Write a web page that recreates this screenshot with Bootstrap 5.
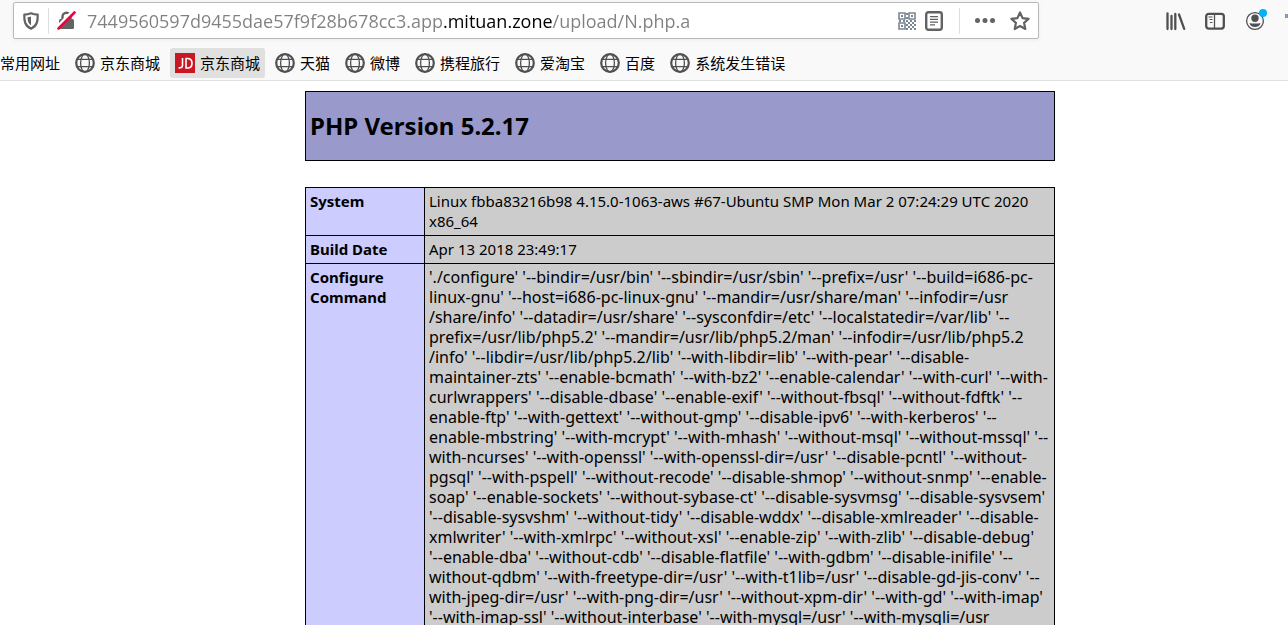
<!DOCTYPE html>
<html lang="zh-CN">
<head>
<meta charset="utf-8">
<meta name="viewport" content="width=device-width, initial-scale=1">
<title>phpinfo()</title>
<link href="https://cdn.jsdelivr.net/npm/bootstrap@5.3.0/dist/css/bootstrap.min.css" rel="stylesheet">
<script src="https://cdn.jsdelivr.net/npm/bootstrap@5.3.0/dist/js/bootstrap.bundle.min.js"></script>
<style>
  body { font-family: "Noto Sans", "Noto Sans CJK SC", sans-serif; color: #000; background: #fff; }
  .chrome { background: #f9f9fa; border-bottom: 1px solid #e0e0e1; height: 81px; }
  .nav-row { height: 43px; padding: 2px 0 4px 13px; }
  .urlbar { background: #fff; border: 1px solid #b9b9bb; border-radius: 2px; box-shadow: 0 1px 4px rgba(0,0,0,.06); padding: 0 8px; margin-right: 127px; color: #5a5a5c; }
  .urlbar .rule { width: 1px; height: 26px; background: #dedee0; }
  .address { font-family: "Open Sans", sans-serif; font-size: 18px; height: 30px; outline: 0; color: transparent; caret-color: #000; margin-left: 11px;
    background: linear-gradient(90deg, #808082 0 356px, #000 356px 466px, #808082 466px);
    -webkit-background-clip: text; background-clip: text; }
  .tool { background: none; border: 0; padding: 0; line-height: 0; color: #505052; }
  .urlbar .tool { color: #636365; }
  .page-tools { gap: 15px; }
  .tool svg, .bookmark svg { display: block; }
  .tools { gap: 19px; }
  .edge { width: 3px; height: 4px; background: #8d97a8; margin-bottom: 10px; }
  .notice { width: 8px; height: 8px; border-radius: 50%; background: #00b3f4; top: -2px; right: -1px; }
  .bookmarks { gap: 5px; height: 37px; padding-top: 5px; }
  .bookmark { height: 30px; padding: 0 5px; gap: 5px; font: 15px/30px "Noto Sans CJK SC", sans-serif; color: #000; text-decoration: none; border-radius: 3px; white-space: nowrap; }
  .bookmark.plain { padding-left: 0; }
  .bookmark.hovered { background: #e0e0e1; }
  .page { padding: 10px 0 0 72px; }
  .info { width: 750px; }
  .banner { background: #9999cc; border: 1px solid #000; height: 70px; padding: 0 4px; margin-bottom: 26px; }
  .banner h1 { font-size: 24px; line-height: 32px; font-weight: 700; }
  .facts { border-collapse: collapse; width: 100%; font-size: 15px; line-height: 20px; }
  .facts th, .facts td { border: 1px solid #000; padding: 3px 4px 4px; vertical-align: top; white-space: nowrap; }
  .facts th { background: #ccccff; width: 119px; }
  .facts td { background: #ccc; }
  .facts .command { font-size: 16px; }
</style>
</head>
<body class="vh-100 overflow-hidden d-flex flex-column">
<svg width="0" height="0" class="position-absolute" aria-hidden="true">
  <symbol id="globe" viewBox="0 0 20 20"><g fill="none" stroke="#505052"><circle cx="10" cy="10" r="8.8" stroke-width="2.2"/><ellipse cx="10" cy="10" rx="4.4" ry="8.8" stroke-width="1.3"/><path d="M2.200 6.300h15.600M2.200 13.700h15.600" stroke-width="1.300"/></g></symbol>
</svg>
<header class="chrome flex-shrink-0">
  <div class="nav-row d-flex align-items-center">
    <div class="urlbar d-flex align-items-center flex-grow-1 h-100">
      <button class="tool" type="button" aria-label="Protection"><svg width="18" height="18" viewBox="0 0 18 18"><path d="M9 1.300c2.400.9 4.500 1.300 6.700 1.400.2 6.300-.6 11.200-6.700 14C2.900 13.900 2.100 9 2.300 2.700 4.500 2.600 6.600 2.200 9 1.300z" fill="none" stroke="currentColor" stroke-width="2.200" stroke-linejoin="round"/><path d="M9 4.500c-1.200.4-2.300.6-3.500.7.1 3.500.7 6.300 3.500 8.200z" fill="currentColor"/></svg></button>
      <span class="rule ms-2"></span>
      <button class="tool ms-2" type="button" aria-label="Connection"><svg width="19" height="19" viewBox="0 0 19 19"><path d="M5.500 9V5.700a4 4 0 0 1 8 0V9" fill="none" stroke="currentColor" stroke-width="2.400"/><rect x="2" y="8" width="15" height="10" rx="1.500" fill="currentColor"/><path d="M0 16 16 0" stroke="#fff" stroke-width="3"/><path d="M1.500 17.500 17.500 1.500" stroke="#f5003d" stroke-width="2.600" stroke-linecap="round"/></svg></button>
      <input class="address flex-grow-1 border-0 p-0" type="text" aria-label="Address" spellcheck="false" value="7449560597d9455dae57f9f28b678cc3.app.mituan.zone/upload/N.php.a">
      <div class="page-tools d-flex align-items-center">
        <div class="d-flex align-items-center gap-2">
          <button class="tool" type="button" aria-label="QR code"><svg width="18" height="18" viewBox="0 0 18 18"><g fill="none" stroke="#7c8594" stroke-width="1.600"><path d="M1 1h6v6H1zM11 1h6v6h-6zM1 11h6v6H1z"/></g><path d="M3 3h2v2H3zM13 3h2v2h-2zM3 13h2v2H3zM8 1h2v2H8zM8 5h2v2H8zM1 8h2v2H1zM5 8h2v2H5zM8 8h2v2H8zM12 8h2v2h-2zM16 8h2v2h-2zM10 10h2v2h-2zM14 10h2v2h-2zM8 12h2v2H8zM12 12h2v2h-2zM16 12h2v2h-2zM10 14h2v2h-2zM14 14h2v2h-2zM8 16h2v2H8zM12 16h2v2h-2zM16 16h2v2h-2z" fill="#7c8594"/></svg></button>
          <button class="tool" type="button" aria-label="Reader view"><svg width="20" height="20" viewBox="0 0 20 20"><rect x="2.200" y="1.200" width="15.600" height="17.600" rx="2.200" fill="none" stroke="currentColor" stroke-width="2.400"/><path d="M6 5.700h8M6 8.400h8M6 11.100h8M6 13.800h5" stroke="currentColor" stroke-width="1.300"/></svg></button>
        </div>
        <span class="rule"></span>
        <button class="tool" type="button" aria-label="Page actions"><svg width="20" height="20" viewBox="0 0 20 20"><g fill="currentColor"><circle cx="2.500" cy="9.500" r="2.500"/><circle cx="10" cy="9.500" r="2.500"/><circle cx="17.500" cy="9.500" r="2.500"/></g></svg></button>
        <button class="tool" type="button" aria-label="Bookmark this page"><svg width="20" height="20" viewBox="0 0 20 20"><path d="m10 1.500 2.600 5.600 6 .7-4.500 4.100 1.200 6.100L10 15l-5.300 3 1.200-6.100L1.400 7.800l6-.7z" fill="none" stroke="currentColor" stroke-width="2.200" stroke-linejoin="round"/></svg></button>
      </div>
    </div>
    <div class="tools d-flex align-items-center flex-shrink-0">
      <button class="tool" type="button" aria-label="Library"><svg width="20" height="20" viewBox="0 0 20 20"><path d="M1.500 2.500v15.500M5.500 5v13M9.300 3v15M13 3.500l5.200 14.300" fill="none" stroke="currentColor" stroke-width="2.300" stroke-linecap="round"/></svg></button>
      <button class="tool" type="button" aria-label="Sidebars"><svg width="20" height="20" viewBox="0 0 20 20"><rect x="1.200" y="2.800" width="17.600" height="14.800" rx="2.500" fill="none" stroke="currentColor" stroke-width="2.300"/><path d="M9.500 3v14.500" stroke="currentColor" stroke-width="1.300"/><path d="M3.500 6h4M4.500 8.500h3M5 11.500h2.500" stroke="currentColor" stroke-width="1.200"/></svg></button>
      <button class="tool position-relative" type="button" aria-label="Account"><svg width="22" height="20" viewBox="0 0 22 20"><circle cx="11" cy="10" r="8.400" fill="none" stroke="currentColor" stroke-width="1.300"/><circle cx="11" cy="7.300" r="3.700" fill="currentColor"/><path d="M5.500 12c2 .7 9 .7 11 0-.4 2.700-2.700 4-5.500 4s-5.100-1.300-5.500-4z" fill="currentColor"/></svg><span class="notice position-absolute"></span></button>
      <span class="edge"></span>
    </div>
  </div>
  <nav class="bookmarks d-flex" aria-label="Bookmarks">
    <a class="bookmark plain d-flex align-items-center" href="#">常用网址</a>
    <a class="bookmark d-flex align-items-center" href="#"><svg width="20" height="20"><use href="#globe"/></svg>京东商城</a>
    <a class="bookmark hovered d-flex align-items-center" href="#"><svg width="20" height="20" viewBox="0 0 20 20"><path d="M0 0h20v20H0z" fill="#c81623"/><path d="M7.500 5v7.500c0 2-1 2.500-4 2.500M11 5.500V15h1.500c3 0 4.500-1.700 4.500-4.800s-1.500-4.700-4.500-4.700z" fill="none" stroke="#fff" stroke-width="1.600"/></svg>京东商城</a>
    <a class="bookmark d-flex align-items-center" href="#"><svg width="20" height="20"><use href="#globe"/></svg>天猫</a>
    <a class="bookmark d-flex align-items-center" href="#"><svg width="20" height="20"><use href="#globe"/></svg>微博</a>
    <a class="bookmark d-flex align-items-center" href="#"><svg width="20" height="20"><use href="#globe"/></svg>携程旅行</a>
    <a class="bookmark d-flex align-items-center" href="#"><svg width="20" height="20"><use href="#globe"/></svg>爱淘宝</a>
    <a class="bookmark d-flex align-items-center" href="#"><svg width="20" height="20"><use href="#globe"/></svg>百度</a>
    <a class="bookmark d-flex align-items-center" href="#"><svg width="20" height="20"><use href="#globe"/></svg>系统发生错误</a>
  </nav>
</header>
<main class="page flex-grow-1 overflow-hidden">
  <div class="info mx-auto">
    <div class="banner d-flex align-items-center"><h1 class="m-0">PHP Version 5.2.17</h1></div>
    <table class="facts">
      <tr><th scope="row">System</th><td>Linux fbba83216b98 4.15.0-1063-aws #67-Ubuntu SMP Mon Mar 2 07:24:29 UTC 2020<br>x86_64</td></tr>
      <tr><th scope="row">Build Date</th><td>Apr 13 2018 23:49:17</td></tr>
      <tr><th scope="row">Configure<br>Command</th><td class="command">'./configure' '--bindir=/usr/bin' '--sbindir=/usr/sbin' '--prefix=/usr' '--build=i686-pc-<br>linux-gnu' '--host=i686-pc-linux-gnu' '--mandir=/usr/share/man' '--infodir=/usr<br>/share/info' '--datadir=/usr/share' '--sysconfdir=/etc' '--localstatedir=/var/lib' '--<br>prefix=/usr/lib/php5.2' '--mandir=/usr/lib/php5.2/man' '--infodir=/usr/lib/php5.2<br>/info' '--libdir=/usr/lib/php5.2/lib' '--with-libdir=lib' '--with-pear' '--disable-<br>maintainer-zts' '--enable-bcmath' '--with-bz2' '--enable-calendar' '--with-curl' '--with-<br>curlwrappers' '--disable-dbase' '--enable-exif' '--without-fbsql' '--without-fdftk' '--<br>enable-ftp' '--with-gettext' '--without-gmp' '--disable-ipv6' '--with-kerberos' '--<br>enable-mbstring' '--with-mcrypt' '--with-mhash' '--without-msql' '--without-mssql' '--<br>with-ncurses' '--with-openssl' '--with-openssl-dir=/usr' '--disable-pcntl' '--without-<br>pgsql' '--with-pspell' '--without-recode' '--disable-shmop' '--without-snmp' '--enable-<br>soap' '--enable-sockets' '--without-sybase-ct' '--disable-sysvmsg' '--disable-sysvsem'<br>'--disable-sysvshm' '--without-tidy' '--disable-wddx' '--disable-xmlreader' '--disable-<br>xmlwriter' '--with-xmlrpc' '--without-xsl' '--enable-zip' '--with-zlib' '--disable-debug'<br>'--enable-dba' '--without-cdb' '--disable-flatfile' '--with-gdbm' '--disable-inifile' '--<br>without-qdbm' '--with-freetype-dir=/usr' '--with-t1lib=/usr' '--disable-gd-jis-conv' '--<br>with-jpeg-dir=/usr' '--with-png-dir=/usr' '--without-xpm-dir' '--with-gd' '--with-imap'<br>'--with-imap-ssl' '--without-interbase' '--with-mysql=/usr' '--with-mysqli=/usr</td></tr>
    </table>
  </div>
</main>
</body>
</html>
